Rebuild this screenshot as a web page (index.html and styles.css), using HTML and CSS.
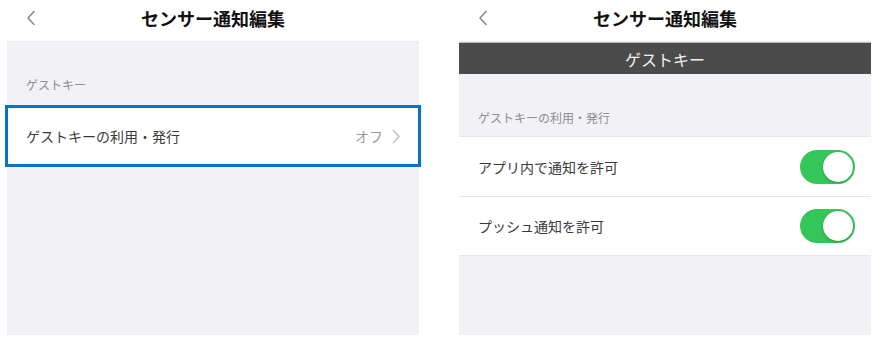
FILE: index.html
```html
<!DOCTYPE html>
<html lang="ja">
<head>
<meta charset="utf-8">
<link rel="stylesheet" href="styles.css">
</head>
<body>
<div class="screens">
  <section class="screen">
    <header class="nav">
      <svg class="back" width="10" height="16" viewBox="0 0 10 16"><path d="M8 1.5 L2 8 L8 14.5" fill="none" stroke="#8a8a8e" stroke-width="1.6" stroke-linecap="round" stroke-linejoin="round"/></svg>
      <h1 class="title">センサー通知編集</h1>
    </header>
    <div class="body">
      <div class="section-label tall">ゲストキー</div>
      <div class="row focused">
        <span class="row-text">ゲストキーの利用・発行</span>
        <span class="row-value">オフ
          <svg class="chev" width="9" height="15" viewBox="0 0 9 15"><path d="M1.5 1.5 L7 7.5 L1.5 13.5" fill="none" stroke="#c4c4c7" stroke-width="1.7" stroke-linecap="round" stroke-linejoin="round"/></svg>
        </span>
      </div>
    </div>
  </section>
  <section class="screen">
    <header class="nav">
      <svg class="back" width="10" height="16" viewBox="0 0 10 16"><path d="M8 1.5 L2 8 L8 14.5" fill="none" stroke="#8a8a8e" stroke-width="1.6" stroke-linecap="round" stroke-linejoin="round"/></svg>
      <h1 class="title">センサー通知編集</h1>
    </header>
    <div class="body">
      <div class="banner">ゲストキー</div>
      <div class="section-label">ゲストキーの利用・発行</div>
      <div class="group">
        <div class="row">
          <span class="row-text">アプリ内で通知を許可</span>
          <span class="switch"><span class="knob"></span></span>
        </div>
        <div class="row">
          <span class="row-text">プッシュ通知を許可</span>
          <span class="switch"><span class="knob"></span></span>
        </div>
      </div>
    </div>
  </section>
</div>
</body>
</html>
```
FILE: styles.css
```css
* { box-sizing: border-box; margin: 0; padding: 0; }
html, body { background: #fff; }
body {
  font-family: "Noto Sans CJK JP", "Noto Sans", sans-serif;
  color: #333;
}
.screens {
  display: flex;
  gap: 40px;
  padding-left: 7px;
}
.screen {
  width: 412px;
  display: flex;
  flex-direction: column;
}
.nav {
  height: 42px;
  display: flex;
  align-items: center;
  justify-content: center;
  position: relative;
  border-bottom: 1px solid #ececec;
}
.back {
  position: absolute;
  left: 19px;
  top: 10px;
}
.title {
  font-size: 18px;
  font-weight: 700;
  color: #111;
  line-height: 1;
  margin-top: -6px;
}
.body {
  height: 293px;
  background: #f1f1f6;
  display: flex;
  flex-direction: column;
}
.section-label {
  font-size: 12px;
  color: #8e8e93;
  padding-left: 19px;
  height: 62px;
  display: flex;
  align-items: center;
  padding-top: 24px;
}
.section-label.tall {
  height: 63px;
  padding-top: 22px;
}
.row {
  height: 60px;
  background: #fff;
  display: flex;
  align-items: center;
  justify-content: space-between;
  padding: 0 16px 0 19px;
}
.row-text {
  font-size: 14px;
  color: #3a3a3a;
}
.row.focused {
  margin: 0 -2px;
  border: 3px solid #0a72c6;
  padding: 0 17px 0 18px;
  height: 62px;
}
.row-value {
  font-size: 14px;
  color: #9a9a9a;
  display: flex;
  align-items: center;
  gap: 9px;
}
.banner {
  height: 32px;
  background: #4b4b4b;
  color: #f0f0f0;
  font-size: 16px;
  display: flex;
  align-items: center;
  justify-content: center;
  border-top: 1px solid #bdbdbd;
}
.group {
  border-top: 1px solid #e6e6ea;
  border-bottom: 1px solid #e6e6ea;
}
.group .row + .row {
  border-top: 1px solid #e6e6ea;
}
.group .row { height: 59px; }
.switch {
  width: 55px;
  height: 34px;
  border-radius: 17px;
  background: #35c659;
  display: flex;
  align-items: center;
  justify-content: flex-end;
  padding: 2px;
}
.knob {
  width: 30px;
  height: 30px;
  border-radius: 50%;
  background: #fff;
  box-shadow: 0 1px 3px rgba(0,0,0,0.25);
}
```
